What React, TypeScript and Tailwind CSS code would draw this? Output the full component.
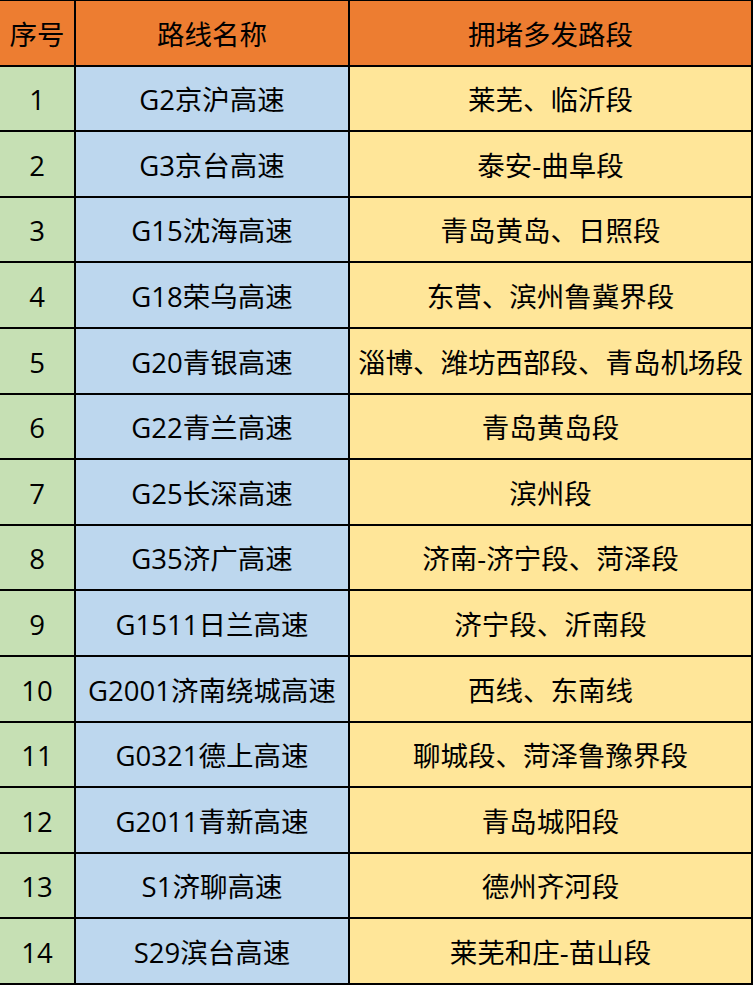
const rows: [string, string, string][] = [
  ["1", "G2京沪高速", "莱芜、临沂段"],
  ["2", "G3京台高速", "泰安-曲阜段"],
  ["3", "G15沈海高速", "青岛黄岛、日照段"],
  ["4", "G18荣乌高速", "东营、滨州鲁冀界段"],
  ["5", "G20青银高速", "淄博、潍坊西部段、青岛机场段"],
  ["6", "G22青兰高速", "青岛黄岛段"],
  ["7", "G25长深高速", "滨州段"],
  ["8", "G35济广高速", "济南-济宁段、菏泽段"],
  ["9", "G1511日兰高速", "济宁段、沂南段"],
  ["10", "G2001济南绕城高速", "西线、东南线"],
  ["11", "G0321德上高速", "聊城段、菏泽鲁豫界段"],
  ["12", "G2011青新高速", "青岛城阳段"],
  ["13", "S1济聊高速", "德州齐河段"],
  ["14", "S29滨台高速", "莱芜和庄-苗山段"],
];

const cell = "flex items-center justify-center whitespace-nowrap pt-[3px]";

export default function App() {
  return (
    <div
      className="grid h-[985px] w-[753px] grid-cols-[74px_272px_401px] grid-rows-[repeat(15,1fr)] gap-[2px] bg-black pt-px pr-[2px] pb-[2px] text-[27.5px] font-normal leading-none text-black"
      style={{ fontFamily: '"Open Sans", "Noto Sans CJK SC", sans-serif' }}
    >
      <div className={`${cell} bg-[#ED7D31]`}>序号</div>
      <div className={`${cell} bg-[#ED7D31]`}>路线名称</div>
      <div className={`${cell} bg-[#ED7D31]`}>拥堵多发路段</div>
      {rows.map(([no, road, section]) => (
        <div key={no} className="contents">
          <div className={`${cell} bg-[#C6E0B4]`}>{no}</div>
          <div className={`${cell} bg-[#BDD7EE]`}>{road}</div>
          <div className={`${cell} bg-[#FFE699]`}>{section}</div>
        </div>
      ))}
    </div>
  );
}
